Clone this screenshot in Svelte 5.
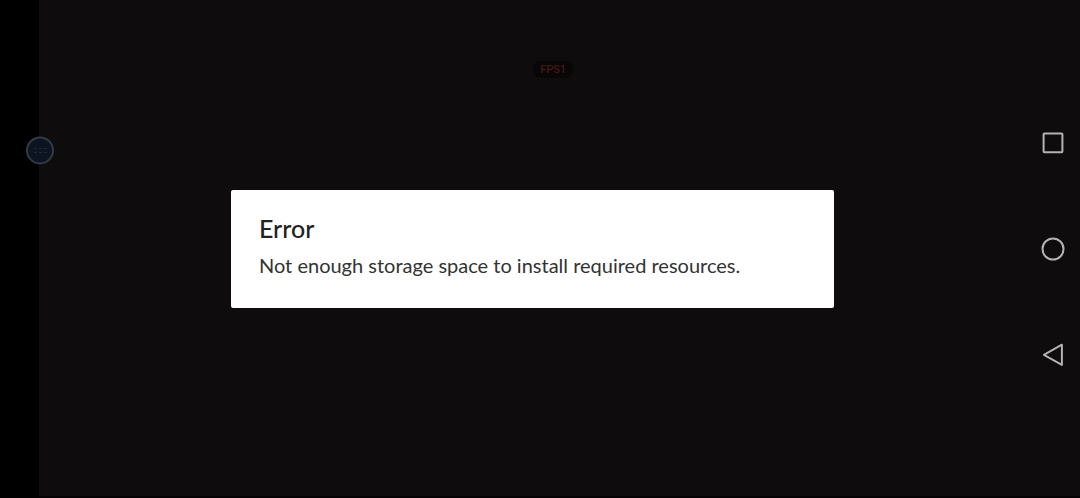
<script>
  const title = 'Error';
  const message = 'Not enough storage space to install required resources.';
</script>

<div class="screen">
  <div class="cutout"></div>
  <main class="stage">
    <div class="dialog" role="alertdialog" aria-labelledby="dialog-title" aria-describedby="dialog-message">
      <h1 id="dialog-title">{title}</h1>
      <p id="dialog-message">{message}</p>
    </div>
  </main>
  <nav class="system-bar">
    <button aria-label="Recent apps">
      <svg viewBox="0 0 24 24"><rect x="2.6" y="2.4" width="18.8" height="18.8" rx="0.8" /></svg>
    </button>
    <button aria-label="Home">
      <svg viewBox="0 0 24 24"><circle cx="12" cy="12" r="10.5" /></svg>
    </button>
    <button aria-label="Back">
      <svg viewBox="0 0 24 24"><path d="M20.9 1.7 V21.9 L2.9 11.8 Z" /></svg>
    </button>
  </nav>
  <span class="fps">FPS1</span>
  <button class="bubble" aria-label="Game tools">
    <svg viewBox="0 0 30 30">
      <circle cx="15" cy="15.4" r="13" />
      <path d="M9 13.5h3M14 13.5h3M19 13.5h3M9 17.5h3M14 17.5h3M19 17.5h3" />
    </svg>
  </button>
</div>

<style>
  :global(body) {
    margin: 0;
    background: #0e0c0d;
  }

  .screen {
    position: relative;
    box-sizing: border-box;
    display: grid;
    grid-template-columns: 39px 1fr 54px;
    min-height: 100vh;
    background: #0e0c0d;
    font-family: Lato, sans-serif;
    box-shadow: inset 0 -2px #050304;
  }

  .cutout {
    background: #000;
  }

  .stage {
    display: flex;
    align-items: center;
    justify-content: center;
  }

  .dialog {
    box-sizing: border-box;
    width: 603px;
    max-width: 100%;
    padding: 23px 28px 29px;
    border-radius: 2px;
    background: #fff;
  }

  h1 {
    margin: 0;
    font-size: 25px;
    line-height: 30px;
    font-weight: 500;
    color: #222;
  }

  p {
    margin: 8px 0 0;
    font-size: 20px;
    line-height: 28px;
    color: #333;
  }

  button {
    display: block;
    padding: 0;
    border: 0;
    background: none;
  }

  svg {
    display: block;
    width: 100%;
    height: 100%;
    fill: none;
  }

  .system-bar {
    display: flex;
    flex-direction: column;
    align-items: center;
    justify-content: center;
    gap: 82px;
  }

  .system-bar button {
    width: 24px;
    height: 24px;
  }

  .system-bar svg {
    stroke: #b4b3b3;
    stroke-width: 2;
    stroke-linejoin: round;
  }

  .fps {
    position: absolute;
    top: 61px;
    left: 553px;
    transform: translateX(-50%);
    padding: 0 7px;
    border-radius: 8px;
    background: #090606;
    color: #5a1a1a;
    font-family: Roboto, sans-serif;
    font-size: 11px;
    line-height: 17px;
  }

  .bubble {
    position: absolute;
    top: 135px;
    left: 25px;
    width: 30px;
    height: 30px;
  }

  .bubble circle {
    fill: #0b1420;
    stroke: #343a42;
    stroke-width: 2;
  }

  .bubble path {
    stroke: #222a34;
    stroke-width: 1;
  }
</style>
